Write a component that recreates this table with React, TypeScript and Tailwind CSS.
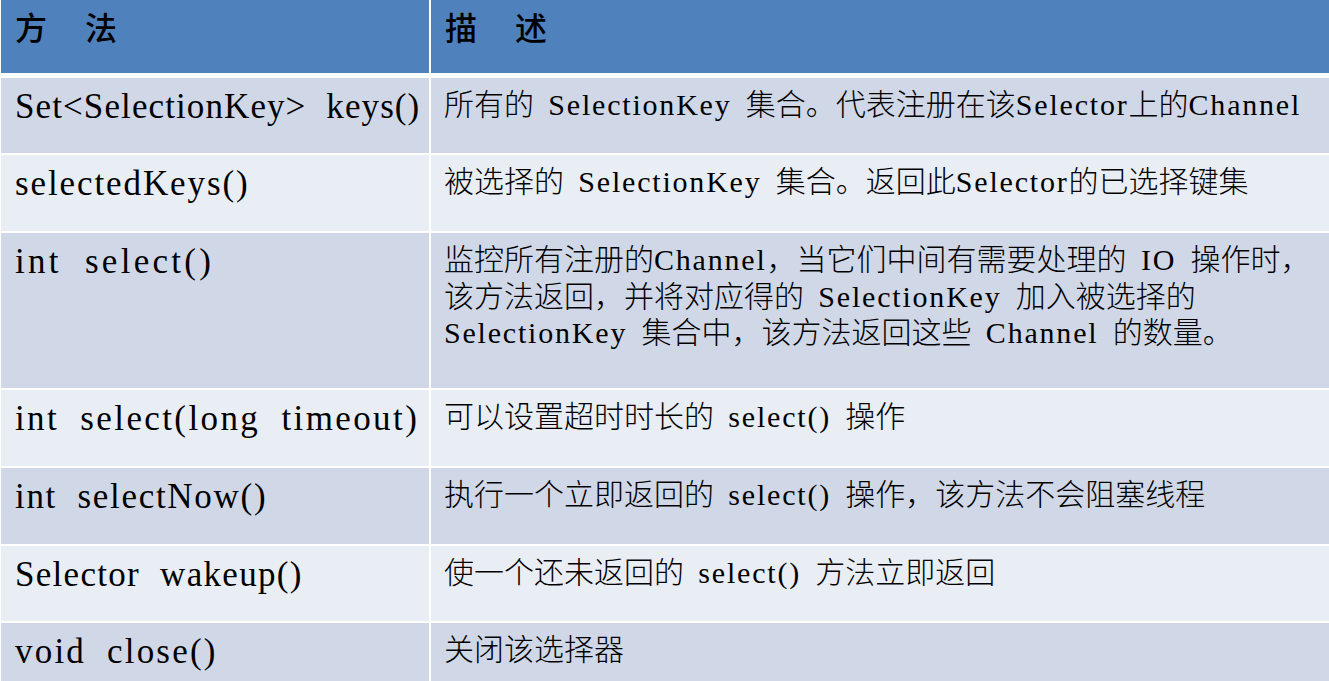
import React from "react";

type Row = { m: string; lt: string; d: string[]; h: string; bg: string };

const DARK = "bg-[#d0d8e8]";
const LIGHT = "bg-[#e9edf4]";

const rows: Row[] = [
  {
    m: "Set<SelectionKey> keys()",
    lt: "tracking-[1.1px] [word-spacing:10px]",
    d: ["所有的 SelectionKey 集合。代表注册在该Selector上的Channel"],
    h: "h-[75px]",
    bg: DARK,
  },
  {
    m: "selectedKeys()",
    lt: "tracking-[1.9px] [word-spacing:10px]",
    d: ["被选择的 SelectionKey 集合。返回此Selector的已选择键集"],
    h: "h-[76px]",
    bg: LIGHT,
  },
  {
    m: "int select()",
    lt: "tracking-[3.3px] [word-spacing:11px]",
    d: [
      "监控所有注册的Channel，当它们中间有需要处理的 IO 操作时，",
      "该方法返回，并将对应得的 SelectionKey 加入被选择的",
      "SelectionKey 集合中，该方法返回这些 Channel 的数量。",
    ],
    h: "h-[155px]",
    bg: DARK,
  },
  {
    m: "int select(long timeout)",
    lt: "tracking-[2.4px] [word-spacing:10px]",
    d: ["可以设置超时时长的 select() 操作"],
    h: "h-[76px]",
    bg: LIGHT,
  },
  {
    m: "int selectNow()",
    lt: "tracking-[1.7px] [word-spacing:10px]",
    d: ["执行一个立即返回的 select() 操作，该方法不会阻塞线程"],
    h: "h-[76px]",
    bg: DARK,
  },
  {
    m: "Selector wakeup()",
    lt: "tracking-[1.3px] [word-spacing:10px]",
    d: ["使一个还未返回的 select() 方法立即返回"],
    h: "h-[75px]",
    bg: LIGHT,
  },
  {
    m: "void close()",
    lt: "tracking-[2.2px] [word-spacing:10px]",
    d: ["关闭该选择器"],
    h: "flex-1",
    bg: DARK,
  },
];

function Mixed({ text }: { text: string }) {
  const parts = text.split(/([\x20-\x7E]+)/).filter((p) => p.length > 0);
  return (
    <>
      {parts.map((p, i) =>
        /[\x20-\x7E]/.test(p[0]) ? (
          <span
            key={i}
            className="font-['Liberation_Serif',serif] text-[30px] tracking-[1.8px] [word-spacing:5px] leading-[20px] whitespace-pre"
          >
            {p}
          </span>
        ) : (
          <span key={i}>{p}</span>
        )
      )}
    </>
  );
}

export default function App() {
  return (
    <div className="w-[1329px] h-[681px] bg-white overflow-hidden flex flex-col text-black">
      <div className="grid grid-cols-[428px_898px] gap-x-[2px] pl-px h-[73px] shrink-0">
        <div className="bg-[#4f81bd] pl-[14px] pt-[8px] font-['Noto_Sans_CJK_SC',sans-serif] text-[32px] leading-[36px] font-medium whitespace-nowrap">
          <span>方</span>
          <span className="ml-[38px]">法</span>
        </div>
        <div className="bg-[#4f81bd] pl-[14px] pt-[8px] font-['Noto_Sans_CJK_SC',sans-serif] text-[32px] leading-[36px] font-medium whitespace-nowrap">
          <span>描</span>
          <span className="ml-[38px]">述</span>
        </div>
      </div>
      <div className="flex flex-col flex-1 mt-[5px] gap-y-[2px] min-h-0">
        {rows.map((r, i) => (
          <div key={i} className={`grid grid-cols-[428px_898px] gap-x-[2px] pl-px shrink-0 ${r.h}`}>
            <div className={`${r.bg} pl-[14px] pt-[11px] overflow-hidden`}>
              <div className={`whitespace-pre font-['Liberation_Serif',serif] text-[35px] leading-[36px] ${r.lt}`}>
                {r.m}
              </div>
            </div>
            <div className={`${r.bg} pl-[13px] pt-[6px] font-['Noto_Sans_CJK_SC',sans-serif] text-[30px] leading-[36.5px] font-light overflow-hidden`}>
              {r.d.map((line, j) => (
                <div key={j} className="whitespace-nowrap">
                  <Mixed text={line} />
                </div>
              ))}
            </div>
          </div>
        ))}
      </div>
    </div>
  );
}
